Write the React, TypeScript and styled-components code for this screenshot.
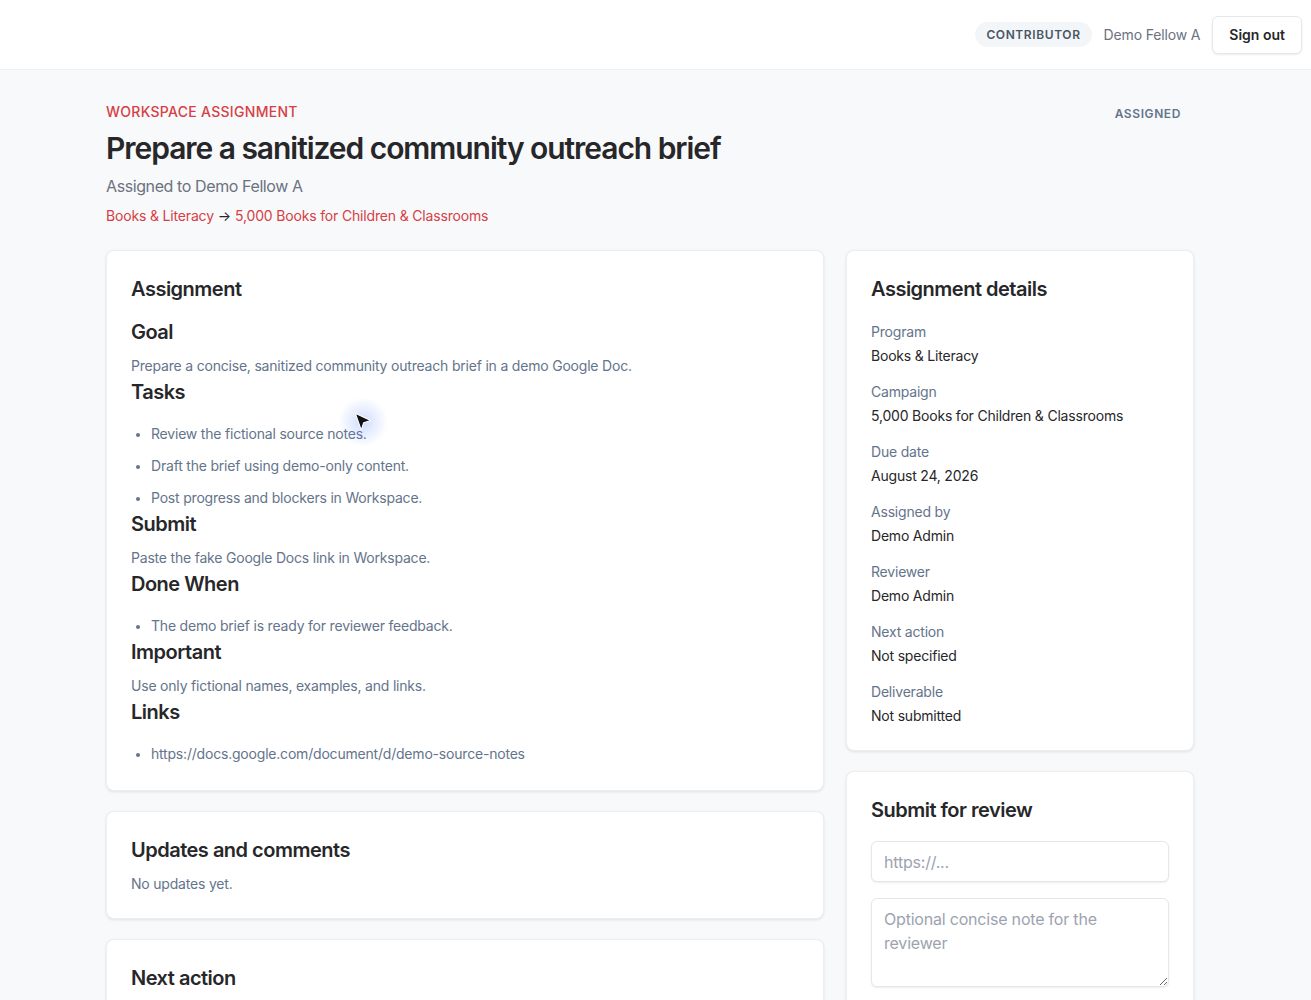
import React from 'react';
import styled, { createGlobalStyle } from 'styled-components';

const GlobalStyle = createGlobalStyle`
  html, body {
    margin: 0;
    padding: 0;
    background: #f8f9fb;
  }
  body {
    font-family: Inter, "Noto Sans", "Liberation Sans", sans-serif;
    color: #27272a;
    -webkit-font-smoothing: antialiased;
  }
  * {
    box-sizing: border-box;
  }
`;

const Page = styled.div`
  min-height: 1000px;
  position: relative;
`;

const TopBar = styled.header`
  height: 70px;
  background: #ffffff;
  border-bottom: 1px solid #eef0f3;
  display: flex;
  align-items: center;
  justify-content: flex-end;
  padding: 0 9px;
  gap: 12px;
`;

const RolePill = styled.span`
  background: #f3f6f9;
  color: #4b5563;
  font-size: 12px;
  font-weight: 600;
  letter-spacing: 0.6px;
  padding: 5px 11px;
  border-radius: 999px;
`;

const UserName = styled.span`
  font-size: 14px;
  letter-spacing: -0.15px;
  color: #6b7280;
`;

const SignOut = styled.button`
  font-family: inherit;
  font-size: 14px;
  font-weight: 600;
  color: #27272a;
  background: #ffffff;
  border: 1px solid #e5e7eb;
  border-radius: 6px;
  height: 38px;
  padding: 0 16px;
  box-shadow: 0 1px 2px rgba(15, 23, 42, 0.08);
  cursor: pointer;
`;

const Main = styled.main`
  width: 1088px;
  margin-left: 106px;
  padding-top: 32px;
`;

const Intro = styled.section`
  display: flex;
  justify-content: space-between;
  align-items: flex-start;
  margin-bottom: 24px;
`;

const IntroText = styled.div`
  display: flex;
  flex-direction: column;
`;

const Eyebrow = styled.div`
  color: #d64045;
  font-size: 14px;
  font-weight: 500;
  letter-spacing: 0.3px;
  line-height: 20px;
`;

const Title = styled.h1`
  margin: 6px 0 0;
  font-size: 30px;
  font-weight: 600;
  line-height: 40px;
  letter-spacing: -1.05px;
  color: #27272a;
`;

const Subtitle = styled.div`
  margin-top: 6px;
  font-size: 16px;
  line-height: 24px;
  letter-spacing: -0.4px;
  color: #6b7280;
`;

const Crumbs = styled.div`
  margin-top: 8px;
  font-size: 14px;
  line-height: 20px;
  letter-spacing: -0.17px;
  color: #d64045;
  display: flex;
  align-items: center;
  gap: 4px;
`;

const Arrow = styled.span`
  color: #27272a;
`;

const Status = styled.div`
  margin: 2px 13px 0 0;
  font-size: 12px;
  font-weight: 600;
  letter-spacing: 0.6px;
  line-height: 20px;
  color: #64748b;
`;

const Columns = styled.div`
  display: grid;
  grid-template-columns: 1fr 348px;
  gap: 22px;
  align-items: start;
`;

const Stack = styled.div`
  display: flex;
  flex-direction: column;
  gap: 20px;
`;

const Card = styled.section`
  background: #ffffff;
  border: 1px solid #eceef2;
  border-radius: 8px;
  box-shadow: 0 1px 3px rgba(15, 23, 42, 0.1);
  padding: 24px;
`;

const CardTitle = styled.h2`
  margin: 0;
  font-size: 20px;
  font-weight: 600;
  line-height: 28px;
  letter-spacing: -0.5px;
  color: #27272a;
`;

const Body = styled.div`
  margin-top: 15px;
`;

const Heading = styled.h3`
  margin: 0;
  font-size: 20px;
  font-weight: 600;
  line-height: 28px;
  letter-spacing: -0.5px;
  color: #27272a;
`;

const Para = styled.p<{ $top?: number; $bottom?: number }>`
  margin: ${(p) => p.$top ?? 10}px 0 ${(p) => p.$bottom ?? 2}px;
  font-size: 14px;
  line-height: 20px;
  letter-spacing: -0.2px;
  color: #64748b;
`;

const List = styled.ul`
  margin: 18px 0 2px;
  padding-left: 20px;
  display: flex;
  flex-direction: column;
  gap: 12px;
  color: #64748b;
  font-size: 14px;
  line-height: 20px;
  letter-spacing: -0.2px;

  li::marker {
    font-size: 12px;
  }
`;

const Details = styled.dl`
  margin: 19px 0 0;
  display: flex;
  flex-direction: column;
  gap: 16px;
`;

const DetailItem = styled.div`
  display: flex;
  flex-direction: column;
  gap: 4px;
`;

const Label = styled.dt`
  font-size: 14px;
  line-height: 20px;
  letter-spacing: -0.2px;
  color: #64748b;
`;

const Value = styled.dd`
  margin: 0;
  font-size: 14px;
  line-height: 20px;
  letter-spacing: -0.2px;
  color: #27272a;
`;

const Form = styled.form`
  margin-top: 17px;
  display: flex;
  flex-direction: column;
  gap: 16px;
`;

const Field = styled.input`
  height: 41px;
  font-family: inherit;
  font-size: 16px;
  letter-spacing: -0.2px;
  padding: 0 12px;
  border: 1px solid #e5e7eb;
  border-radius: 6px;
  box-shadow: 0 1px 2px rgba(15, 23, 42, 0.08);
  color: #27272a;

  &::placeholder {
    color: #9ca3af;
  }
`;

const NoteField = styled.textarea`
  height: 89px;
  font-family: inherit;
  font-size: 16px;
  letter-spacing: -0.2px;
  line-height: 24px;
  padding: 8px 12px;
  border: 1px solid #e5e7eb;
  border-radius: 6px;
  box-shadow: 0 1px 2px rgba(15, 23, 42, 0.08);
  color: #27272a;
  resize: vertical;

  &::placeholder {
    color: #9ca3af;
  }
`;

/* mouse pointer with its soft highlight ring */
const Pointer = styled.div`
  position: absolute;
  left: 338px;
  top: 397px;
  width: 50px;
  height: 50px;
  border-radius: 50%;
  background: radial-gradient(circle, rgba(90, 135, 255, 0.3) 0%, rgba(90, 135, 255, 0.12) 40%, rgba(90, 135, 255, 0) 70%);
  display: flex;
  align-items: center;
  justify-content: center;
  pointer-events: none;
`;

type Section = { heading: string; text?: string; items?: string[] };

const sections: Section[] = [
  { heading: 'Goal', text: 'Prepare a concise, sanitized community outreach brief in a demo Google Doc.' },
  {
    heading: 'Tasks',
    items: [
      'Review the fictional source notes.',
      'Draft the brief using demo-only content.',
      'Post progress and blockers in Workspace.',
    ],
  },
  { heading: 'Submit', text: 'Paste the fake Google Docs link in Workspace.' },
  { heading: 'Done When', items: ['The demo brief is ready for reviewer feedback.'] },
  { heading: 'Important', text: 'Use only fictional names, examples, and links.' },
  { heading: 'Links', items: ['https://docs.google.com/document/d/demo-source-notes'] },
];

const details: [string, string][] = [
  ['Program', 'Books & Literacy'],
  ['Campaign', '5,000 Books for Children & Classrooms'],
  ['Due date', 'August 24, 2026'],
  ['Assigned by', 'Demo Admin'],
  ['Reviewer', 'Demo Admin'],
  ['Next action', 'Not specified'],
  ['Deliverable', 'Not submitted'],
];

export default function App() {
  return (
    <Page>
      <GlobalStyle />
      <TopBar>
        <RolePill>CONTRIBUTOR</RolePill>
        <UserName>Demo Fellow A</UserName>
        <SignOut>Sign out</SignOut>
      </TopBar>

      <Main>
        <Intro>
          <IntroText>
            <Eyebrow>WORKSPACE ASSIGNMENT</Eyebrow>
            <Title>Prepare a sanitized community outreach brief</Title>
            <Subtitle>Assigned to Demo Fellow A</Subtitle>
            <Crumbs>
              <span>Books &amp; Literacy</span>
              <Arrow>→</Arrow>
              <span>5,000 Books for Children &amp; Classrooms</span>
            </Crumbs>
          </IntroText>
          <Status>ASSIGNED</Status>
        </Intro>

        <Columns>
          <Stack>
            <Card>
              <CardTitle>Assignment</CardTitle>
              <Body>
                {sections.map((s) => (
                  <React.Fragment key={s.heading}>
                    <Heading>{s.heading}</Heading>
                    {s.text && <Para>{s.text}</Para>}
                    {s.items && (
                      <List>
                        {s.items.map((item) => (
                          <li key={item}>{item}</li>
                        ))}
                      </List>
                    )}
                  </React.Fragment>
                ))}
              </Body>
            </Card>

            <Card>
              <CardTitle>Updates and comments</CardTitle>
              <Para $top={10} $bottom={0}>No updates yet.</Para>
            </Card>

            <Card>
              <CardTitle>Next action</CardTitle>
              <Para $top={10} $bottom={0}>Not specified</Para>
            </Card>
          </Stack>

          <Stack>
            <Card>
              <CardTitle>Assignment details</CardTitle>
              <Details>
                {details.map(([label, value]) => (
                  <DetailItem key={label}>
                    <Label>{label}</Label>
                    <Value>{value}</Value>
                  </DetailItem>
                ))}
              </Details>
            </Card>

            <Card>
              <CardTitle>Submit for review</CardTitle>
              <Form onSubmit={(e) => e.preventDefault()}>
                <Field placeholder="https://..." />
                <NoteField placeholder="Optional concise note for the reviewer" />
              </Form>
            </Card>
          </Stack>
        </Columns>
      </Main>

      <Pointer>
        <svg width="22" height="22" viewBox="0 0 20 20">
          <path d="M3 2 L17 8.6 L10.6 10.6 L8.4 17.4 Z" fill="#111" stroke="#fff" strokeWidth="1" strokeLinejoin="round" />
        </svg>
      </Pointer>
    </Page>
  );
}
